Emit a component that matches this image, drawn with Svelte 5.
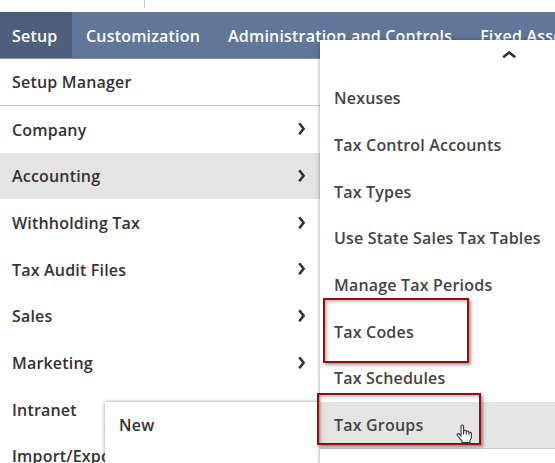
<script>
  const tabs = ['Setup', 'Customization', 'Administration and Controls', 'Fixed Assets'];
  const menu = [
    { label: 'Company', more: true },
    { label: 'Accounting', more: true, active: true },
    { label: 'Withholding Tax', more: true },
    { label: 'Tax Audit Files', more: true },
    { label: 'Sales', more: true },
    { label: 'Marketing', more: true },
    { label: 'Intranet' },
    { label: 'Import/Export' }
  ];
  const submenu = ['Nexuses', 'Tax Control Accounts', 'Tax Types', 'Use State Sales Tax Tables', 'Manage Tax Periods', 'Tax Codes', 'Tax Schedules', 'Tax Groups'];
</script>

<div class="screen">
  <div class="top"></div>
  <nav>
    {#each tabs as tab, i}
      <div class="tab" class:current={i === 0}>{tab}</div>
    {/each}
  </nav>
  <div class="menu">
    <div class="item first">Setup Manager</div>
    {#each menu as m}
      <div class="item" class:active={m.active}>
        <span>{m.label}</span>
        {#if m.more}
          <svg width="10" height="16" viewBox="0 0 10 16"><path d="M2.2 2.3 L6.6 7.8 L2.2 13.3" /></svg>
        {/if}
      </div>
    {/each}
  </div>

  <div class="flyout new">New</div>

  <div class="flyout sub">
    <div class="up"><svg width="16" height="10" viewBox="0 0 16 10"><path d="M2.2 7.3 L8.2 2.5 L14.2 7.3" /></svg></div>
    {#each submenu as s, i}
      <div class="entry" class:hover={i === 7}>{s}</div>
    {/each}
  </div>

  <div class="mark codes"></div>
  <div class="mark groups"></div>
  <svg class="hand" width="18" height="20" viewBox="0 0 18 20">
    <path d="M5 12 V2.6 Q5 1 6.3 1 Q7.6 1 7.6 2.6 V7 Q8.2 6 9.3 6.3 Q10.2 6.5 10.3 7.4 Q11.2 6.7 12.2 7.2 Q12.8 7.5 13 8.4 Q15.4 7.9 15.4 10 V13.5 L13.8 16.8 V18.6 H6 V17 L2.3 12.6 Q0.7 10.6 1.5 9.9 Q2.6 9.1 3.9 10.6 Z" />
    <path class="fingers" d="M7.6 7 V10.5 M10.3 7.4 V10.5 M13 8.4 V11" />
  </svg>
</div>

<style>
  :global(body) { margin: 0; background: #fff; }
  .screen {
    position: relative;
    width: 555px;
    height: 463px;
    overflow: hidden;
    background: #fff;
    color: #333;
    font: 600 16px/22px "Open Sans", sans-serif;
    letter-spacing: 0.19px;
    white-space: nowrap;
  }
  .top { width: 144px; height: 8px; border-right: 1px solid #ccc; margin-bottom: 4px; }
  nav { display: flex; height: 46px; background: #607799; color: #fff; border-bottom: 1px solid #8293ad; box-shadow: inset 0 -1px #566b8a; }
  .tab { padding: 13px 14px 0; box-sizing: border-box; flex: none; }
  .tab:first-child { padding-left: 12px; width: 72px; }
  .current { background: #4d5f7a; }
  .menu { width: 320px; }
  .item { display: flex; align-items: center; justify-content: space-between; box-sizing: border-box; height: 46.67px; padding: 1px 13px 0 12px; }
  .item.first { height: 47px; padding-top: 0; border-bottom: 1px solid #c8c8c8; }
  .active { background: #e4e4e4; }
  svg { display: block; overflow: visible; }
  .item svg { margin-top: -1px; }
  path { fill: none; stroke: #333; stroke-width: 2.6; }
  .flyout { position: absolute; background: #fff; box-shadow: 0 0 4px rgba(0, 0, 0, 0.42); }
  .new { left: 105px; top: 402px; width: 215px; height: 80px; padding: 12px 14px; box-sizing: border-box; }
  .sub { left: 320px; top: 40px; width: 250px; height: 440px; color: #444; }
  .up { height: 35px; display: flex; justify-content: flex-start; padding: 10px 0 0 181px; box-sizing: border-box; }
  .entry { display: flex; align-items: center; height: 46.67px; padding-left: 14px; }
  .hover { background: #e4e4e4; border-bottom: 1px solid #ccc; }
  .mark { position: absolute; box-sizing: border-box; border: 2px solid #980c10; box-shadow: 2px 2px 3px rgba(0, 0, 0, 0.4), inset 2px 2px 3px rgba(0, 0, 0, 0.25); }
  .codes { left: 323px; top: 298px; width: 146px; height: 65px; }
  .groups { left: 317px; top: 393px; width: 164px; height: 52px; }
  .hand { position: absolute; left: 456px; top: 424px; }
  .hand path { fill: #fff; stroke: #33354a; stroke-width: 1.1; }
  .hand .fingers { fill: none; }
</style>
